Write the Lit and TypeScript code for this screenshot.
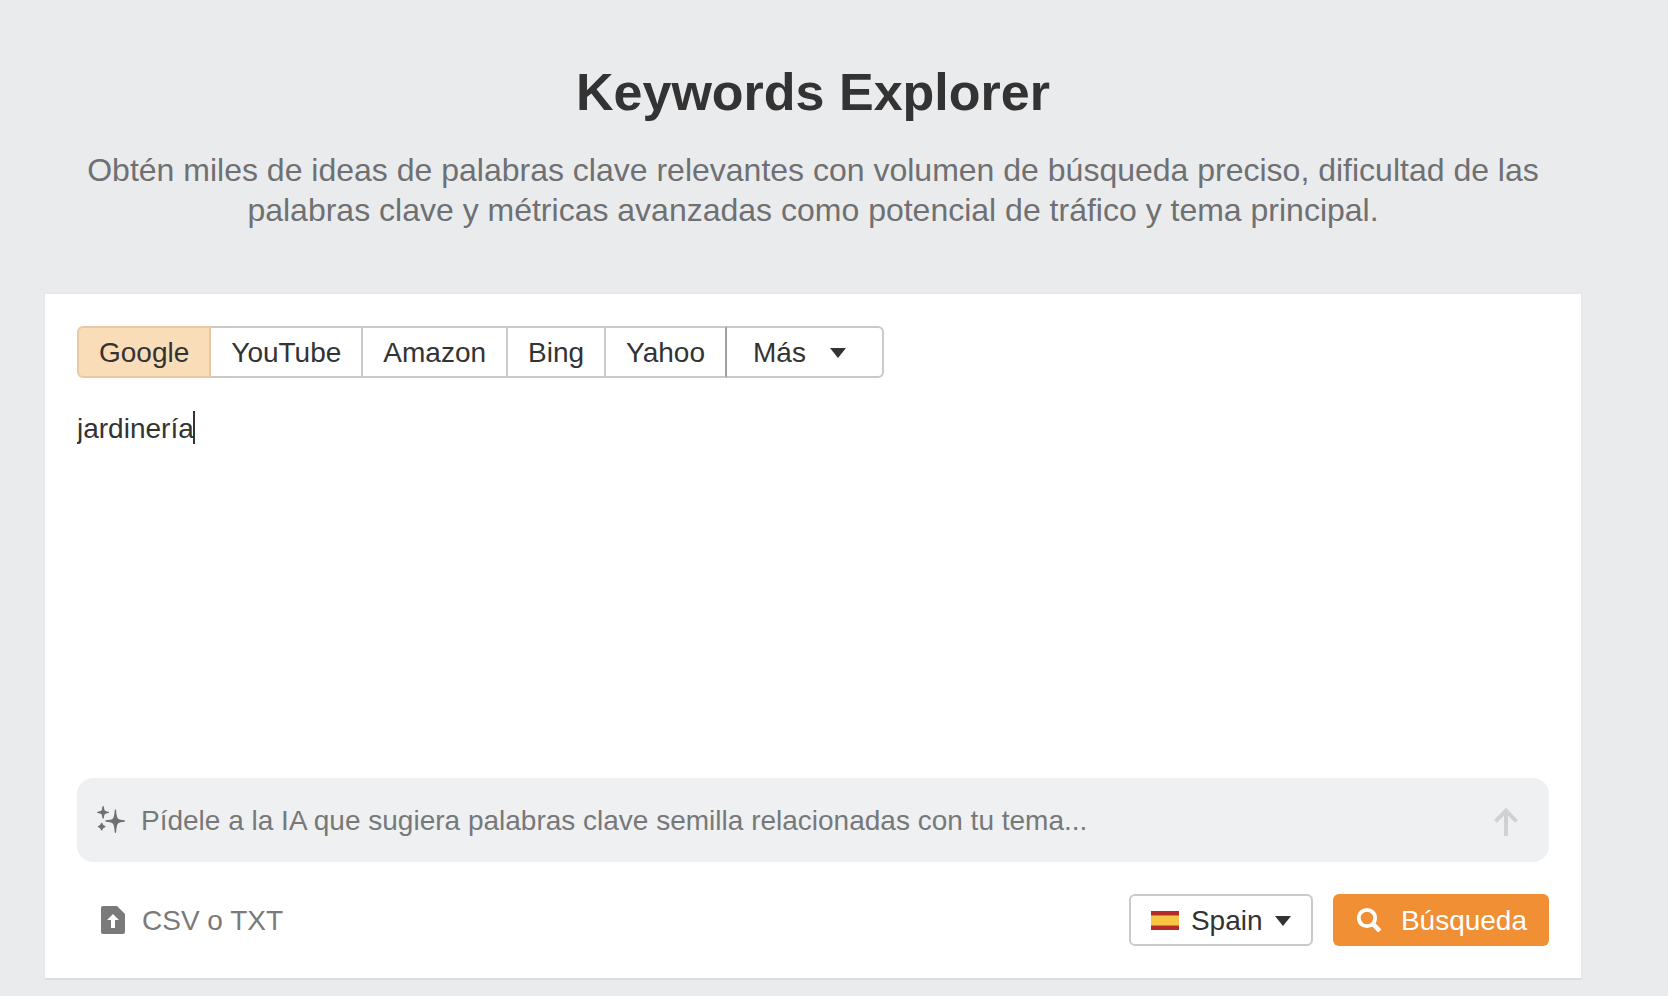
import { LitElement, html, css, svg } from "lit";
import { customElement, property, state, query } from "lit/decorators.js";
import { classMap } from "lit/directives/class-map.js";
import { styleMap } from "lit/directives/style-map.js";

const caretDown = html`<svg width="16" height="12" viewBox="0 0 16 12" aria-hidden="true">
  ${svg`<path d="M0 2H16L8 12Z" fill="#333333" />`}
</svg>`;

const sparkles = html`<svg width="28" height="28" viewBox="0 0 28 28" aria-hidden="true">
  <g fill="#6f7072" stroke="#6f7072" stroke-width="1.4" stroke-linejoin="round">
    <path d="M18.4 4.2Q18.9 12.2 21 13.6Q22.6 14.7 27.3 15Q22.6 15.4 21 16.6Q18.9 18 18.4 26.2Q17.9 18 15.8 16.6Q14.2 15.4 9 15Q14.2 14.7 15.8 13.6Q17.9 12.2 18.4 4.2Z" />
    <path d="M6.1 .8Q6.4 4.4 7.5 5.2Q8.3 6 11.3 6.4Q8.3 6.8 7.5 7.6Q6.4 8.6 6.1 12Q5.8 8.6 4.7 7.6Q3.9 6.8 .8 6.4Q3.9 6 4.7 5.2Q5.8 4.4 6.1 .8Z" />
    <path d="M4.7 17.4Q5.2 19.8 7.9 20.6Q5.2 21.4 4.7 23.9Q4.2 21.4 1.5 20.6Q4.2 19.8 4.7 17.4Z" />
  </g>
</svg>`;

const arrowUp = html`<svg width="24" height="32" viewBox="0 0 24 32" aria-hidden="true">
  <path d="M1.5 17.3L12 6.6L22.5 17.3M12 7V32" fill="none" stroke="#d0d1d3" stroke-width="4" />
</svg>`;

const fileUp = html`<svg width="24" height="28" viewBox="0 0 24 28" aria-hidden="true">
  <path
    fill="#7a7a7a"
    fill-rule="evenodd"
    d="M2 0H16L24 8V26Q24 28 22 28H2Q0 28 0 26V2Q0 0 2 0ZM12 8L6 14H10V22H14V14H18Z"
  />
</svg>`;

const magnifier = html`<svg width="25" height="26" viewBox="0 0 25 26" aria-hidden="true">
  <circle cx="10" cy="11" r="8.2" fill="none" stroke="#ffffff" stroke-width="3.8" />
  <path d="M15.6 16.6L22.8 24" fill="none" stroke="#ffffff" stroke-width="4.6" />
</svg>`;

const flagSpain = html`<svg width="28" height="20" viewBox="0 0 28 20" aria-hidden="true">
  <path d="M0 1H28V20H0Z" fill="#b52b27" />
  <path d="M0 5H28V16H0Z" fill="#dd7a33" />
  <path d="M0 6H28V15H0Z" fill="#f7c544" />
</svg>`;

const font = css`
  "Liberation Sans", Arial, Helvetica, sans-serif
`;

@customElement("engine-tabs")
class EngineTabs extends LitElement {
  @property({ type: Array }) engines: string[] = [];
  @state() private active = "Google";

  static styles = css`
    :host {
      display: flex;
    }
    .tab,
    .more {
      height: 52px;
      box-sizing: border-box;
      margin: 0;
      padding: 2px 20px 0;
      border: 2px solid #cacaca;
      border-left-width: 0;
      background: #ffffff;
      color: #333333;
      font: 28px/36px ${font};
      cursor: pointer;
    }
    .tab:first-child {
      border-left-width: 2px;
      border-radius: 6px 0 0 6px;
    }
    .tab.active {
      background: #f9dcb8;
      border-color: #e8c9a4;
    }
    .tab:nth-last-child(2) {
      border-right-color: #a0a0a0;
    }
    .more {
      display: flex;
      align-items: center;
      gap: 24px;
      padding: 0 36px 0 26px;
      border-radius: 0 6px 6px 0;
    }
    .label {
      padding-top: 2px;
    }
  `;

  render() {
    return html`${this.engines.map(
        (name) => html`<button
          type="button"
          class=${classMap({ tab: true, active: name === this.active })}
          aria-pressed=${name === this.active}
          @click=${() => (this.active = name)}
        >
          ${name}
        </button>`
      )}<button type="button" class="more" aria-haspopup="menu">
        <span class="label">Más</span>${caretDown}
      </button>`;
  }
}

@customElement("keyword-input")
class KeywordInput extends LitElement {
  @property() value = "";
  @state() private caretX = 0;
  @query("textarea") private area!: HTMLTextAreaElement;

  static styles = css`
    :host {
      display: block;
      position: relative;
    }
    .area {
      display: block;
      width: 100%;
      height: 336px;
      box-sizing: border-box;
      margin: 0;
      padding: 0;
      border: 0;
      outline: 0;
      resize: none;
      background: transparent;
      caret-color: transparent;
      color: #333333;
      font: 28px/38px ${font};
    }
    .caret {
      position: absolute;
      top: 1px;
      width: 2px;
      height: 33px;
      background: #333333;
    }
  `;

  firstUpdated() {
    this.placeCaret();
  }

  private placeCaret() {
    const ctx = document.createElement("canvas").getContext("2d")!;
    ctx.font = getComputedStyle(this.area).font;
    this.caretX = Math.floor(ctx.measureText(this.area.value).width);
  }

  render() {
    return html`<textarea
        class="area"
        aria-label="Palabras clave"
        spellcheck="false"
        .value=${this.value}
        @input=${this.placeCaret}
      ></textarea>
      <span class="caret" style=${styleMap({ left: `${this.caretX}px` })}></span>`;
  }
}

@customElement("app-root")
class AppRoot extends LitElement {
  private engines = ["Google", "YouTube", "Amazon", "Bing", "Yahoo"];

  static styles = css`
    :host {
      display: block;
      min-height: 100vh;
      box-sizing: border-box;
      padding: 60px 87px 16px 45px;
      background: #eaebed;
      color: #333333;
      font: 28px/36px ${font};
    }
    .header {
      padding: 0 32px;
      text-align: center;
    }
    .title {
      margin: 0 0 26px;
      font-size: 52px;
      line-height: 64px;
      font-weight: 700;
    }
    .lead {
      margin: 0 0 64px;
      color: #6f7072;
      font-size: 32px;
      line-height: 40px;
    }
    .card {
      display: flex;
      flex-direction: column;
      gap: 32px;
      padding: 32px;
      background: #ffffff;
      box-shadow: 0 2px 0 0 #dcdde1, 0 0 0 2px #e7e8eb;
    }
    .ask {
      display: flex;
      align-items: center;
      height: 84px;
      box-sizing: border-box;
      padding: 0 31px 0 20px;
      border-radius: 16px;
      background: #eff0f2;
    }
    .prompt {
      flex: 1;
      min-width: 0;
      height: 36px;
      margin: 0 16px;
      padding: 2px 0 0;
      border: 0;
      outline: 0;
      background: transparent;
      color: #333333;
      font: inherit;
    }
    .prompt::placeholder {
      color: #77787a;
      opacity: 1;
    }
    .plain {
      display: flex;
      align-items: center;
      gap: 17px;
      margin: 0;
      padding: 0;
      border: 0;
      background: transparent;
      color: #7a7a7a;
      font: inherit;
      cursor: pointer;
    }
    .actions {
      display: flex;
      align-items: center;
      gap: 20px;
    }
    .upload {
      margin-right: auto;
      padding-left: 24px;
    }
    .country {
      display: flex;
      align-items: center;
      gap: 12px;
      height: 52px;
      box-sizing: border-box;
      padding: 0 20px;
      border: 2px solid #cacaca;
      border-radius: 6px;
    }
    .select {
      appearance: none;
      margin: 0;
      padding: 2px 0 0;
      border: 0;
      outline: 0;
      background: transparent;
      color: #333333;
      font: inherit;
    }
    .label {
      padding-top: 2px;
    }
    .search {
      display: flex;
      align-items: center;
      gap: 19px;
      height: 52px;
      margin: 0;
      padding: 0 22px 0 24px;
      border: 0;
      border-radius: 6px;
      background: #f18f34;
      color: #ffffff;
      font: inherit;
      cursor: pointer;
    }
  `;

  render() {
    return html`
      <header class="header">
        <h1 class="title">Keywords Explorer</h1>
        <p class="lead">
          Obtén miles de ideas de palabras clave relevantes con volumen de búsqueda preciso,
          dificultad de las palabras clave y métricas avanzadas como potencial de tráfico y tema
          principal.
        </p>
      </header>
      <main class="card">
        <engine-tabs .engines=${this.engines}></engine-tabs>
        <keyword-input value="jardinería"></keyword-input>
        <div class="ask">
          ${sparkles}
          <input
            class="prompt"
            type="text"
            aria-label="Sugerencias de la IA"
            placeholder="Pídele a la IA que sugiera palabras clave semilla relacionadas con tu tema..."
          />
          <button type="button" class="plain" aria-label="Enviar">${arrowUp}</button>
        </div>
        <div class="actions">
          <button type="button" class="plain upload">
            ${fileUp}<span class="label">CSV o TXT</span>
          </button>
          <label class="country">
            ${flagSpain}
            <select class="select" aria-label="País">
              <option>Spain</option>
            </select>
            ${caretDown}
          </label>
          <button type="button" class="search">
            ${magnifier}<span class="label">Búsqueda</span>
          </button>
        </div>
      </main>
    `;
  }
}
